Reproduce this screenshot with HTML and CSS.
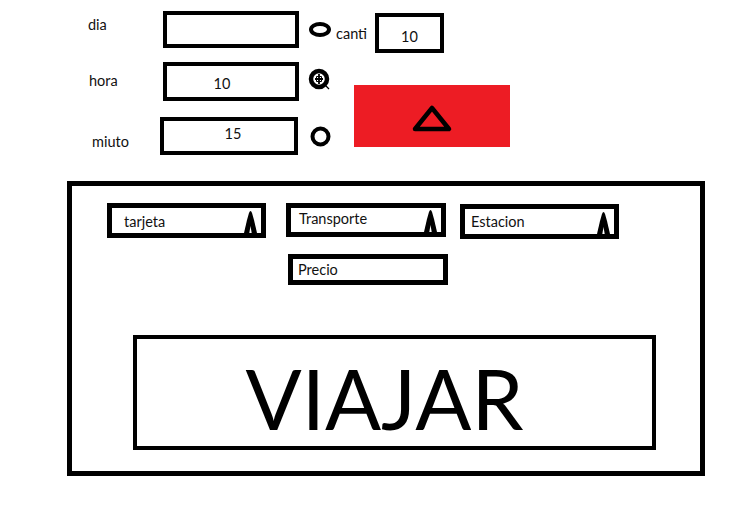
FILE: index.html
```html
<!DOCTYPE html>
<html lang="es">
<head>
<meta charset="utf-8">
<title>Viajar</title>
<link rel="stylesheet" href="styles.css">
</head>
<body>
<div class="top">
  <div class="fields">
    <div class="field field-dia">
      <span class="label">dia</span>
      <div class="box"></div>
      <svg class="radio radio-oval" width="22" height="15" viewBox="0 0 22 15"><ellipse cx="11" cy="7.5" rx="9" ry="5.5" fill="none" stroke="#000" stroke-width="4"/></svg>
    </div>
    <div class="field field-hora">
      <span class="label">hora</span>
      <div class="box">10</div>
      <svg class="radio radio-target" width="24" height="24" viewBox="0 0 24 24"><circle cx="11" cy="11" r="8" fill="none" stroke="#000" stroke-width="4.5"/><path d="M11 6v10M7 11h8" stroke="#000" stroke-width="1.8" fill="none"/><path d="M8.5 8.5h5v5h-5z" fill="none" stroke="#000" stroke-width="1"/><path d="M18 18l3 3" stroke="#000" stroke-width="1.2"/></svg>
    </div>
    <div class="field field-miuto">
      <span class="label">miuto</span>
      <div class="box">15</div>
      <svg class="radio radio-ring" width="21" height="21" viewBox="0 0 21 21"><circle cx="10.5" cy="10.5" r="8" fill="none" stroke="#000" stroke-width="4"/></svg>
    </div>
  </div>
  <div class="side">
    <div class="canti-row">
      <span class="canti-label">canti</span>
      <div class="canti-box">10</div>
    </div>
    <div class="red-btn">
      <svg width="42" height="30" viewBox="0 0 42 30"><path d="M21 5 L38 26 L4 26 Z" fill="none" stroke="#000" stroke-width="4.5" stroke-linejoin="round"/></svg>
    </div>
  </div>
</div>

<div class="panel">
  <div class="selects">
    <div class="select sel-tarjeta"><span class="sel-text">tarjeta</span><svg class="arrow" width="13" height="24" viewBox="0 0 13 24"><path d="M0 24 L3 11 L5 4 Q6.5 0 8 4 L10 11 L13 24 Z" fill="#000"/><path d="M5.3 24 L6.5 17 L7.7 24 Z" fill="#fff"/></svg></div>
    <div class="select sel-transporte"><span class="sel-text">Transporte</span><svg class="arrow" width="13" height="24" viewBox="0 0 13 24"><path d="M0 24 L3 11 L5 4 Q6.5 0 8 4 L10 11 L13 24 Z" fill="#000"/><path d="M5.3 24 L6.5 17 L7.7 24 Z" fill="#fff"/></svg></div>
    <div class="select sel-estacion"><span class="sel-text">Estacion</span><svg class="arrow" width="13" height="24" viewBox="0 0 13 24"><path d="M0 24 L3 11 L5 4 Q6.5 0 8 4 L10 11 L13 24 Z" fill="#000"/><path d="M5.3 24 L6.5 17 L7.7 24 Z" fill="#fff"/></svg></div>
  </div>
  <div class="precio"><span class="sel-text">Precio</span></div>
  <div class="viajar">VIAJAR</div>
</div>
</body>
</html>
```

FILE: styles.css
```css
* { box-sizing: border-box; }
html, body { margin: 0; padding: 0; background: #fff; }
body {
  font-family: Lato, "Open Sans", "Liberation Sans", sans-serif;
  font-size: 14.5px;
  color: #111;
  width: 742px;
  height: 513px;
  overflow: hidden;
}

/* top area */
.top {
  display: flex;
  height: 181px;
  padding: 11px 0 0 88px;
}
.fields { display: flex; flex-direction: column; }
.field { display: flex; align-items: center; }
.label { display: block; line-height: 18px; }
.box {
  border: 4px solid #000;
  width: 136px;
  display: flex;
  align-items: center;
  justify-content: center;
  line-height: 1;
}
.field-dia .label { width: 75px; margin-bottom: 9px; }
.field-dia .box { height: 37px; }
.field-dia .radio { margin-left: 10px; }

.field-hora { margin-top: 14px; }
.field-hora .label { width: 74px; margin-left: 1px; margin-bottom: 2px; }
.field-hora .box { height: 39px; padding: 6px 18px 0 0; }
.field-hora .radio { margin-left: 9px; margin-bottom: 4px; }

.field-miuto { margin-top: 16px; }
.field-miuto .label { width: 68px; margin-left: 4px; margin-top: 12px; }
.field-miuto .box { height: 38px; width: 138px; padding: 0 0 4px 8px; }
.field-miuto .radio { margin-left: 12px; }

.side { margin-left: 4px; padding-top: 2px; display: flex; flex-direction: column; }
.canti-row { display: flex; align-items: flex-start; }
.canti-label { margin-top: 12px; width: 39px; line-height: 18px; }
.canti-box {
  width: 69px;
  height: 40px;
  border: 4px solid #000;
  display: flex;
  align-items: center;
  justify-content: center;
  padding-top: 8px;
  line-height: 1;
}
.red-btn {
  margin: 32px 0 0 18px;
  width: 156px;
  height: 62px;
  background: #ed1c24;
  display: flex;
  align-items: center;
  justify-content: center;
  padding: 4px 0 0 0;
}

/* panel */
.panel {
  margin-left: 67px;
  width: 638px;
  height: 295px;
  border: 5px solid #000;
  padding: 17px 0 0 35px;
}
.selects { display: flex; align-items: flex-start; }
.select {
  height: 35px;
  width: 159px;
  border: 5px solid #000;
  display: flex;
  align-items: center;
  line-height: 18px;
}
.sel-tarjeta .sel-text { margin: 3px 0 0 12px; }
.sel-transporte { margin-left: 20px; width: 160px; height: 34px; }
.sel-transporte .sel-text { margin: -3px 0 0 8px; }
.sel-estacion { margin-left: 14px; margin-top: 1px; }
.sel-estacion .sel-text { margin: 0 0 0 6px; }
.arrow { margin-left: auto; margin-right: 4px; align-self: flex-end; display: block; }

.precio {
  margin: 15px 0 0 181px;
  width: 160px;
  height: 31px;
  border: 5px solid #000;
  display: flex;
  align-items: center;
  line-height: 18px;
}
.precio .sel-text { margin-left: 5px; }

.viajar {
  margin: 50px 0 0 26px;
  width: 523px;
  height: 115px;
  border: 4px solid #000;
  display: flex;
  align-items: center;
  justify-content: center;
  font-size: 83px;
  line-height: 1;
  color: #000;
  padding: 12px 20px 0 0;
}
```
